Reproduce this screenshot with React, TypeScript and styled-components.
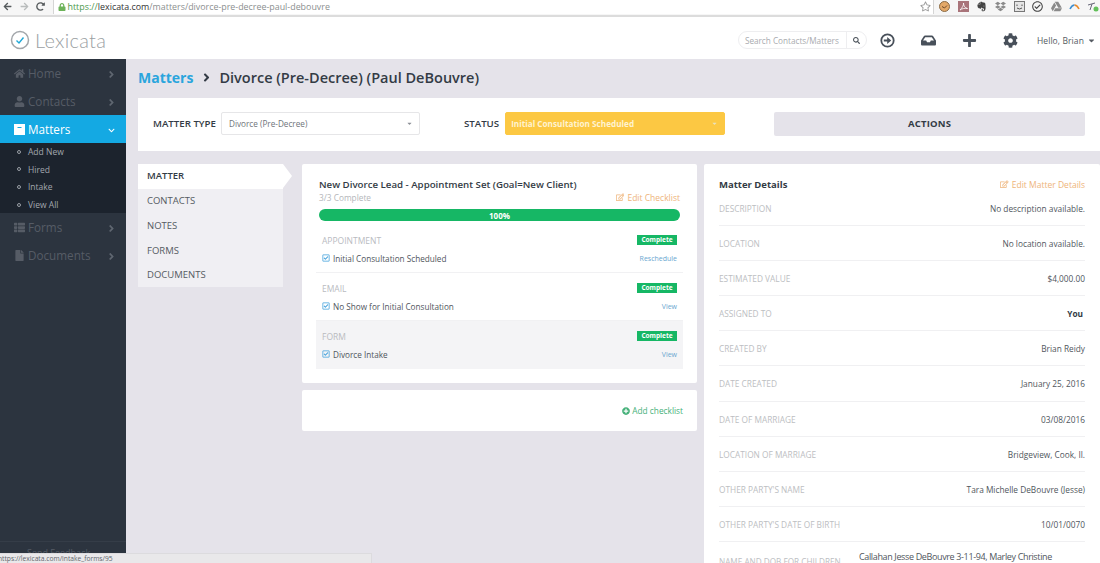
import React, { ReactElement, ReactNode } from 'react';
import styled, { createGlobalStyle } from 'styled-components';
import {
  FaAngleRight,
  FaChevronDown,
  FaCog,
  FaFile,
  FaHome,
  FaInbox,
  FaPlus,
  FaPlusCircle,
  FaRegCheckSquare,
  FaRegEdit,
  FaRegStar,
  FaSearch,
  FaThList,
  FaUser,
  FaLock,
  FaArrowLeft,
  FaArrowRight,
  FaRedoAlt,
  FaDropbox,
  FaEvernote,
  FaCaretDown,
  FaRegCheckCircle,
  FaGoogleDrive,
} from 'react-icons/fa';

const GlobalStyle = createGlobalStyle`
  html, body {
    margin: 0;
    padding: 0;
    height: 100%;
    overflow: hidden;
    background: #e5e3ea;
  }
  body {
    font-family: "Open Sans", "Liberation Sans", sans-serif;
    color: #333b45;
  }
  * {
    box-sizing: border-box;
  }
`;

const Page = styled.div`
  position: relative;
  width: 1100px;
  height: 563px;
  overflow: hidden;
  display: flex;
  flex-direction: column;
`;

const BrowserBar = styled.div`
  height: 17px;
  flex: none;
  display: flex;
  align-items: center;
  padding: 0 1px 2px 3px;
  background: #f6f6f6;
  border-bottom: 2px solid #dcdcdc;
`;

const NavIcon = styled.span<{ $dim?: boolean }>`
  display: flex;
  width: 16.5px;
  font-size: 9px;
  color: ${({ $dim }) => ($dim ? '#b9bcbc' : '#555a5c')};
`;

const UrlBox = styled.div`
  flex: 1;
  height: 15px;
  display: flex;
  align-items: center;
  gap: 2px;
  padding-left: 4px;
  background: #fff;
  border-left: 1px solid #d5d5d5;
  font-size: 8.9px;
  color: #8b8f8f;
`;

const UrlScheme = styled.span`
  color: #4d9a4d;
`;

const UrlHost = styled.span`
  color: #333;
`;

const StarSlot = styled.span`
  display: flex;
  width: 14px;
  height: 15px;
  align-items: center;
  font-size: 11px;
  color: #9a9a9a;
  background: #fff;
  border-right: 1px solid #d5d5d5;
`;

const Extensions = styled.div`
  display: flex;
  align-items: center;
  gap: 7.6px;
  padding-left: 5px;
  font-size: 11px;
`;

const Ext = styled.span<{ $color?: string }>`
  display: flex;
  width: 11px;
  justify-content: center;
  color: ${({ $color }) => $color || '#777'};
`;

const Header = styled.header`
  height: 42px;
  flex: none;
  display: flex;
  align-items: center;
  padding: 4px 4px 0 10px;
  background: #fff;
`;

const Logo = styled.div`
  display: flex;
  align-items: center;
  gap: 5px;
  font-family: "Lato", "Open Sans", sans-serif;
  font-size: 20px;
  font-weight: 300;
  letter-spacing: 0.3px;
  color: #9b9fa3;
`;

const SearchBox = styled.div`
  display: flex;
  align-items: center;
  width: 129px;
  height: 18px;
  margin-left: auto;
  border: 1px solid #eeeef0;
  border-radius: 9px;
  font-size: 8.2px;
  color: #a9abaf;
`;

const SearchText = styled.span`
  flex: 1;
  padding-left: 6px;
  white-space: nowrap;
`;

const SearchBtn = styled.span`
  width: 20px;
  height: 100%;
  display: flex;
  align-items: center;
  justify-content: center;
  border-left: 1px solid #eeeef0;
  font-size: 7px;
  color: #4c535b;
`;

const TopIcons = styled.div`
  display: flex;
  align-items: center;
  margin-left: 13px;
  gap: 26px;
  font-size: 15px;
  color: #48505a;
`;

const TopIcon = styled.span`
  display: flex;
  width: 15px;
  justify-content: center;
`;

const Hello = styled.div`
  display: flex;
  align-items: center;
  gap: 3px;
  margin-left: 19px;
  font-size: 8.5px;
  letter-spacing: 0.1px;
  color: #555b62;
`;

const Body = styled.div`
  flex: 1;
  min-height: 0;
  display: flex;
`;

const Sidebar = styled.nav`
  width: 126px;
  flex: none;
  display: flex;
  flex-direction: column;
  background: #2c343f;
`;

const NavItem = styled.div<{ $active?: boolean }>`
  height: 28px;
  flex: none;
  display: flex;
  align-items: center;
  gap: 1px;
  padding: 0 9px 0 14px;
  font-size: 11.7px;
  background: ${({ $active }) => ($active ? '#14a9e3' : 'transparent')};
  color: ${({ $active }) => ($active ? '#fff' : '#565c66')};
`;

const NavGlyph = styled.span`
  display: flex;
  width: 13px;
  font-size: 11px;
`;

const NavLabel = styled.span`
  flex: 1;
`;

const NavCaret = styled.span<{ $active?: boolean }>`
  display: flex;
  margin: 3px ${({ $active }) => ($active ? '2px' : '0')} 0 0;
  font-size: ${({ $active }) => ($active ? '7px' : '11px')};
  color: ${({ $active }) => ($active ? '#fff' : '#5f6670')};
`;

const SubNav = styled.div`
  height: 70px;
  flex: none;
  background: #1c232d;
`;

const SubItem = styled.div`
  height: 17.6px;
  display: flex;
  align-items: center;
  gap: 7px;
  padding-left: 17px;
  font-size: 8.5px;
  color: #a2a7ad;
`;

const SubDot = styled.span`
  width: 4px;
  height: 4px;
  border: 1px solid #9a9fa6;
  border-radius: 50%;
`;

const Feedback = styled.div`
  margin-top: auto;
  height: 22px;
  padding: 4px 0 0 27px;
  border-top: 1px solid #353d48;
  font-size: 9px;
  color: #565c66;
`;

const Main = styled.main`
  flex: 1;
  min-width: 0;
  display: flex;
  flex-direction: column;
  padding: 0 0 0 12px;
`;

const Crumbs = styled.div`
  height: 39px;
  flex: none;
  display: flex;
  align-items: center;
  gap: 6.5px;
  padding-bottom: 2px;
  font-size: 14.5px;
  font-weight: 600;
  color: #333b45;
`;

const CrumbLink = styled.span`
  color: #2aa5dd;
  font-weight: 700;
  font-size: 14px;
`;

const CrumbSep = styled.span`
  display: flex;
  font-size: 13px;
`;

const FilterCard = styled.section`
  height: 53px;
  flex: none;
  display: flex;
  align-items: center;
  padding: 0 15px 2px;
  background: #fff;
`;

const FieldLabel = styled.span`
  font-size: 9.7px;
  font-weight: 600;
  color: #333b45;
  white-space: nowrap;
`;

const SelectBox = styled.div<{ $status?: boolean }>`
  height: 23px;
  display: flex;
  align-items: center;
  justify-content: space-between;
  padding: 0 6px 0 ${({ $status }) => ($status ? '5px' : '7px')};
  border-radius: 2px;
  font-size: 8.2px;
  border: 1px solid ${({ $status }) => ($status ? '#fcc843' : '#e6e6e8')};
  background: ${({ $status }) => ($status ? '#fcc843' : '#fff')};
  color: ${({ $status }) => ($status ? '#fff3d0' : '#6f747a')};
  font-weight: ${({ $status }) => ($status ? 700 : 400)};
  width: ${({ $status }) => ($status ? '220px' : '199px')};
  margin-left: ${({ $status }) => ($status ? '6px' : '5px')};
`;

const SelectCaret = styled.span<{ $status?: boolean }>`
  display: flex;
  font-size: 7px;
  color: ${({ $status }) => ($status ? '#e8e1c0' : '#8c9096')};
`;

const StatusLabel = styled(FieldLabel)`
  margin-left: 44px;
`;

const ActionsBtn = styled.div`
  width: 311px;
  height: 24px;
  margin-left: 49px;
  display: flex;
  align-items: center;
  justify-content: center;
  background: #e5e3ea;
  border-radius: 2px;
  font-size: 9.5px;
  font-weight: 700;
  letter-spacing: 0.2px;
  color: #333b45;
`;

const Columns = styled.div`
  flex: 1;
  min-height: 0;
  display: flex;
  align-items: flex-start;
  margin-top: 13px;
`;

const Tabs = styled.div`
  width: 145px;
  flex: none;
  background: #f0eff3;
`;

const Tab = styled.div<{ $active?: boolean }>`
  position: relative;
  height: 24.6px;
  display: flex;
  align-items: center;
  padding: 0 0 ${({ $active }) => ($active ? '1px' : '0')} 9px;
  font-size: 9.5px;
  font-weight: ${({ $active }) => ($active ? 600 : 400)};
  color: ${({ $active }) => ($active ? '#333b45' : '#555b62')};
  background: ${({ $active }) => ($active ? '#fff' : 'transparent')};

  ${({ $active }) =>
    $active &&
    `&::after {
      content: '';
      position: absolute;
      top: 0;
      left: 100%;
      border-style: solid;
      border-width: 12.3px 0 12.3px 9px;
      border-color: transparent transparent transparent #fff;
    }`}
`;

const MiddleCol = styled.div`
  width: 395px;
  flex: none;
  margin-left: 19px;
  display: flex;
  flex-direction: column;
  gap: 7px;
`;

const Card = styled.section`
  background: #fff;
  border-radius: 2px;
`;

const ChecklistCard = styled(Card)`
  height: 219px;
  padding: 14px 14px 0;
`;

const ChecklistTitle = styled.div`
  padding-left: 3px;
  font-size: 9.7px;
  font-weight: 600;
  line-height: 14px;
  color: #333b45;
`;

const ChecklistMeta = styled.div`
  display: flex;
  justify-content: space-between;
  align-items: center;
  height: 12px;
  margin-top: -1px;
  padding: 0 3px;
  font-size: 8.3px;
  color: #b4b6ba;
`;

const EditLink = styled.span`
  display: flex;
  align-items: center;
  gap: 3px;
  font-size: 8.5px;
  color: #eeb47a;
`;

const Progress = styled.div`
  height: 12px;
  margin: 6px 3px 4px;
  display: flex;
  align-items: center;
  justify-content: center;
  border-radius: 6px;
  background: #16b765;
  font-size: 8px;
  font-weight: 700;
  color: #fff;
`;

const Step = styled.div<{ $shaded?: boolean }>`
  height: 48px;
  padding: 10px 6px 0;
  background: ${({ $shaded }) => ($shaded ? '#f4f4f6' : 'transparent')};
  border-bottom: ${({ $shaded }) => ($shaded ? 'none' : '1px solid #f1f1f3')};
`;

const StepTop = styled.div`
  display: flex;
  justify-content: space-between;
  align-items: center;
  height: 11px;
  font-size: 8.5px;
  color: #b9bbbf;
`;

const Badge = styled.span`
  width: 40px;
  height: 10px;
  margin-top: -2px;
  display: flex;
  align-items: center;
  justify-content: center;
  background: #16b765;
  font-size: 6.5px;
  font-weight: 700;
  color: #fff;
`;

const StepBottom = styled.div`
  display: flex;
  justify-content: space-between;
  align-items: center;
  margin-top: 6px;
  height: 12px;
`;

const StepName = styled.span`
  display: flex;
  align-items: center;
  gap: 3px;
  font-size: 8.2px;
  color: #50565d;
`;

const CheckGlyph = styled.span`
  display: flex;
  font-size: 8px;
  color: #3f9fdb;
`;

const StepLink = styled.span`
  font-size: 7px;
  color: #6aa7d0;
`;

const AddCard = styled(Card)`
  height: 41px;
  display: flex;
  align-items: center;
  justify-content: flex-end;
  padding-right: 14px;
`;

const AddLink = styled.span`
  display: flex;
  align-items: center;
  gap: 2px;
  font-size: 8.3px;
  color: #46b17a;
`;

const DetailsCard = styled(Card)`
  flex: 1;
  margin-left: 7px;
  padding: 14px 15px 0;
  height: 420px;
  overflow: hidden;
`;

const DetailsHead = styled.div`
  display: flex;
  justify-content: space-between;
  align-items: center;
  height: 13px;
`;

const DetailsTitle = styled.span`
  font-size: 9.5px;
  font-weight: 700;
  color: #333b45;
`;

const Row = styled.div`
  height: 35.1px;
  display: flex;
  justify-content: space-between;
  padding-top: 11px;
  border-bottom: 1px solid #f0f0f2;
  font-size: 8.3px;
  line-height: 14px;
`;

const LastRow = styled.div`
  display: grid;
  grid-template-columns: 140px 1fr;
  line-height: 14px;
  padding-top: 8px;
`;

const RowLabel = styled.span`
  color: #bcbec2;
`;

const LastLabel = styled(RowLabel)`
  padding-top: 5px;
  font-size: 8.2px;
  white-space: nowrap;
`;

const RowValue = styled.span<{ $bold?: boolean }>`
  color: ${({ $bold }) => ($bold ? '#333b45' : '#50565d')};
  font-weight: ${({ $bold }) => ($bold ? 700 : 400)};
  padding-right: ${({ $bold }) => ($bold ? '2px' : '0')};
`;

const LastValue = styled(RowValue)`
  font-size: 9px;
  letter-spacing: -0.36px;
`;

const StatusTip = styled.div`
  position: absolute;
  left: 0;
  bottom: 0;
  width: 372px;
  height: 10px;
  background: #e9e8ea;
  border-top: 1px solid #dcdbde;
  border-right: 1px solid #dcdbde;
  font-size: 6.7px;
  line-height: 9px;
  text-indent: -2px;
  color: #61656a;
  white-space: nowrap;
`;

const navTop = [
  { label: 'Home', icon: <FaHome /> },
  { label: 'Contacts', icon: <FaUser /> },
];

const navBottom = [
  { label: 'Forms', icon: <FaThList /> },
  { label: 'Documents', icon: <FaFile /> },
];

const subItems = ['Add New', 'Hired', 'Intake', 'View All'];

const tabs = ['MATTER', 'CONTACTS', 'NOTES', 'FORMS', 'DOCUMENTS'];

const steps = [
  { kind: 'APPOINTMENT', name: 'Initial Consultation Scheduled', link: 'Reschedule' },
  { kind: 'EMAIL', name: 'No Show for Initial Consultation', link: 'View' },
  { kind: 'FORM', name: 'Divorce Intake', link: 'View', shaded: true },
];

const details = [
  { label: 'DESCRIPTION', value: 'No description available.' },
  { label: 'LOCATION', value: 'No location available.' },
  { label: 'ESTIMATED VALUE', value: '$4,000.00' },
  { label: 'ASSIGNED TO', value: 'You', bold: true },
  { label: 'CREATED BY', value: 'Brian Reidy' },
  { label: 'DATE CREATED', value: 'January 25, 2016' },
  { label: 'DATE OF MARRIAGE', value: '03/08/2016' },
  { label: 'LOCATION OF MARRIAGE', value: 'Bridgeview, Cook, Il.' },
  { label: "OTHER PARTY'S NAME", value: 'Tara Michelle DeBouvre (Jesse)' },
  { label: "OTHER PARTY'S DATE OF BIRTH", value: '10/01/0070' },
];

function LogoMark(): ReactElement {
  return (
    <svg width="20" height="20" viewBox="0 0 20 20">
      <circle cx="10" cy="10" r="8.5" fill="none" stroke="#a3a7ab" strokeWidth="1.5" />
      <path d="M6.5 10.5 L9 13 L13.5 7.5" fill="none" stroke="#1fa8d8" strokeWidth="1.4" />
    </svg>
  );
}

function MattersGlyph(): ReactElement {
  return (
    <svg width="11" height="11" viewBox="0 0 11 11">
      <path d="M0 0h11v11H0z M3.5 3v1h4V3z" fill="#fff" fillRule="evenodd" />
    </svg>
  );
}

function ClockFace(): ReactElement {
  return (
    <svg width="11" height="11" viewBox="0 0 11 11">
      <circle cx="5.5" cy="5.5" r="5" fill="#e3a868" stroke="#8a6a45" />
      <path d="M3 5.5 L5.5 7 L8 4.5" fill="none" stroke="#6e4a28" />
    </svg>
  );
}

function PdfBox(): ReactElement {
  return (
    <svg width="11" height="11" viewBox="0 0 11 11">
      <rect width="11" height="11" fill="#a9747a" />
      <path d="M2 9 C4 7 6 4 5.5 2 C5.5 5 7 7 9.5 7.5 C7 7 4 7.5 2 9z" fill="none" stroke="#fff" strokeWidth="0.8" />
    </svg>
  );
}

function FaceBox(): ReactElement {
  return (
    <svg width="11" height="11" viewBox="0 0 11 11">
      <rect x="0.5" y="0.5" width="10" height="10" fill="#e4e4e4" stroke="#777" />
      <path d="M3 3.5v1.5M8 3.5v1.5M3 7 Q5.5 9 8 7" fill="none" stroke="#555" />
    </svg>
  );
}

function ArcMark(): ReactElement {
  return (
    <svg width="11" height="11" viewBox="0 0 11 11">
      <path d="M1 8 Q3 4 5.5 4" fill="none" stroke="#3d8ed0" strokeWidth="1.6" />
      <path d="M5.5 4 Q8 4 10 8" fill="none" stroke="#e98b2e" strokeWidth="1.6" />
    </svg>
  );
}

function SignalMark(): ReactElement {
  return (
    <svg width="11" height="11" viewBox="0 0 11 11">
      <path d="M0 4 L7 2 M4 3 L2 9" fill="none" stroke="#667" strokeWidth="1" />
      <circle cx="8" cy="8" r="2.5" fill="#63c05a" />
    </svg>
  );
}

function CircleArrow(): ReactElement {
  return (
    <svg width="15" height="15" viewBox="0 0 15 15">
      <circle cx="7.5" cy="7.5" r="6.2" fill="none" stroke="#48505a" strokeWidth="1.8" />
      <path d="M3.8 6.4h3.4V4l4 3.5-4 3.5V8.6H3.8z" fill="#48505a" />
    </svg>
  );
}

function NavRow({ label, icon }: { label: string; icon: ReactNode }): ReactElement {
  return (
    <NavItem>
      <NavGlyph>{icon}</NavGlyph>
      <NavLabel>{label}</NavLabel>
      <NavCaret>
        <FaAngleRight />
      </NavCaret>
    </NavItem>
  );
}

export default function App(): ReactElement {
  return (
    <Page>
      <GlobalStyle />
      <BrowserBar>
        <NavIcon>
          <FaArrowLeft />
        </NavIcon>
        <NavIcon $dim>
          <FaArrowRight />
        </NavIcon>
        <NavIcon>
          <FaRedoAlt />
        </NavIcon>
        <UrlBox>
          <FaLock color="#6db35a" size={8} />
          <span>
            <UrlScheme>https://</UrlScheme>
            <UrlHost>lexicata.com</UrlHost>/matters/divorce-pre-decree-paul-debouvre
          </span>
        </UrlBox>
        <StarSlot>
          <FaRegStar />
        </StarSlot>
        <Extensions>
          <Ext>
            <ClockFace />
          </Ext>
          <Ext>
            <PdfBox />
          </Ext>
          <Ext $color="#444">
            <FaEvernote />
          </Ext>
          <Ext $color="#8a8a8a">
            <FaDropbox />
          </Ext>
          <Ext>
            <FaceBox />
          </Ext>
          <Ext $color="#444">
            <FaRegCheckCircle />
          </Ext>
          <Ext $color="#8a8a8a">
            <FaGoogleDrive />
          </Ext>
          <Ext>
            <ArcMark />
          </Ext>
          <Ext>
            <SignalMark />
          </Ext>
        </Extensions>
      </BrowserBar>

      <Header>
        <Logo>
          <LogoMark />
          Lexicata
        </Logo>
        <SearchBox>
          <SearchText>Search Contacts/Matters</SearchText>
          <SearchBtn>
            <FaSearch />
          </SearchBtn>
        </SearchBox>
        <TopIcons>
          <TopIcon>
            <CircleArrow />
          </TopIcon>
          <TopIcon>
            <FaInbox />
          </TopIcon>
          <TopIcon>
            <FaPlus />
          </TopIcon>
          <TopIcon>
            <FaCog />
          </TopIcon>
        </TopIcons>
        <Hello>
          Hello, Brian
          <FaCaretDown size={9} />
        </Hello>
      </Header>

      <Body>
        <Sidebar>
          {navTop.map((item) => (
            <NavRow key={item.label} label={item.label} icon={item.icon} />
          ))}
          <NavItem $active>
            <NavGlyph>
              <MattersGlyph />
            </NavGlyph>
            <NavLabel>Matters</NavLabel>
            <NavCaret $active>
              <FaChevronDown />
            </NavCaret>
          </NavItem>
          <SubNav>
            {subItems.map((item) => (
              <SubItem key={item}>
                <SubDot />
                {item}
              </SubItem>
            ))}
          </SubNav>
          {navBottom.map((item) => (
            <NavRow key={item.label} label={item.label} icon={item.icon} />
          ))}
          <Feedback>Send Feedback</Feedback>
        </Sidebar>

        <Main>
          <Crumbs>
            <CrumbLink>Matters</CrumbLink>
            <CrumbSep>
              <FaAngleRight />
            </CrumbSep>
            Divorce (Pre-Decree) (Paul DeBouvre)
          </Crumbs>

          <FilterCard>
            <FieldLabel>MATTER TYPE</FieldLabel>
            <SelectBox>
              Divorce (Pre-Decree)
              <SelectCaret>
                <FaCaretDown />
              </SelectCaret>
            </SelectBox>
            <StatusLabel>STATUS</StatusLabel>
            <SelectBox $status>
              Initial Consultation Scheduled
              <SelectCaret $status>
                <FaCaretDown />
              </SelectCaret>
            </SelectBox>
            <ActionsBtn>ACTIONS</ActionsBtn>
          </FilterCard>

          <Columns>
            <Tabs>
              {tabs.map((tab, i) => (
                <Tab key={tab} $active={i === 0}>
                  {tab}
                </Tab>
              ))}
            </Tabs>

            <MiddleCol>
              <ChecklistCard>
                <ChecklistTitle>New Divorce Lead - Appointment Set (Goal=New Client)</ChecklistTitle>
                <ChecklistMeta>
                  3/3 Complete
                  <EditLink>
                    <FaRegEdit />
                    Edit Checklist
                  </EditLink>
                </ChecklistMeta>
                <Progress>100%</Progress>
                {steps.map((step) => (
                  <Step key={step.kind} $shaded={step.shaded}>
                    <StepTop>
                      {step.kind}
                      <Badge>Complete</Badge>
                    </StepTop>
                    <StepBottom>
                      <StepName>
                        <CheckGlyph>
                          <FaRegCheckSquare />
                        </CheckGlyph>
                        {step.name}
                      </StepName>
                      <StepLink>{step.link}</StepLink>
                    </StepBottom>
                  </Step>
                ))}
              </ChecklistCard>
              <AddCard>
                <AddLink>
                  <FaPlusCircle size={8} />
                  Add checklist
                </AddLink>
              </AddCard>
            </MiddleCol>

            <DetailsCard>
              <DetailsHead>
                <DetailsTitle>Matter Details</DetailsTitle>
                <EditLink>
                  <FaRegEdit />
                  Edit Matter Details
                </EditLink>
              </DetailsHead>
              {details.map((row) => (
                <Row key={row.label}>
                  <RowLabel>{row.label}</RowLabel>
                  <RowValue $bold={row.bold}>{row.value}</RowValue>
                </Row>
              ))}
              <LastRow>
                <LastLabel>NAME AND DOB FOR CHILDREN</LastLabel>
                <LastValue>Callahan Jesse DeBouvre 3-11-94, Marley Christine</LastValue>
              </LastRow>
            </DetailsCard>
          </Columns>
        </Main>
      </Body>
      <StatusTip>https://lexicata.com/intake_forms/95</StatusTip>
    </Page>
  );
}
